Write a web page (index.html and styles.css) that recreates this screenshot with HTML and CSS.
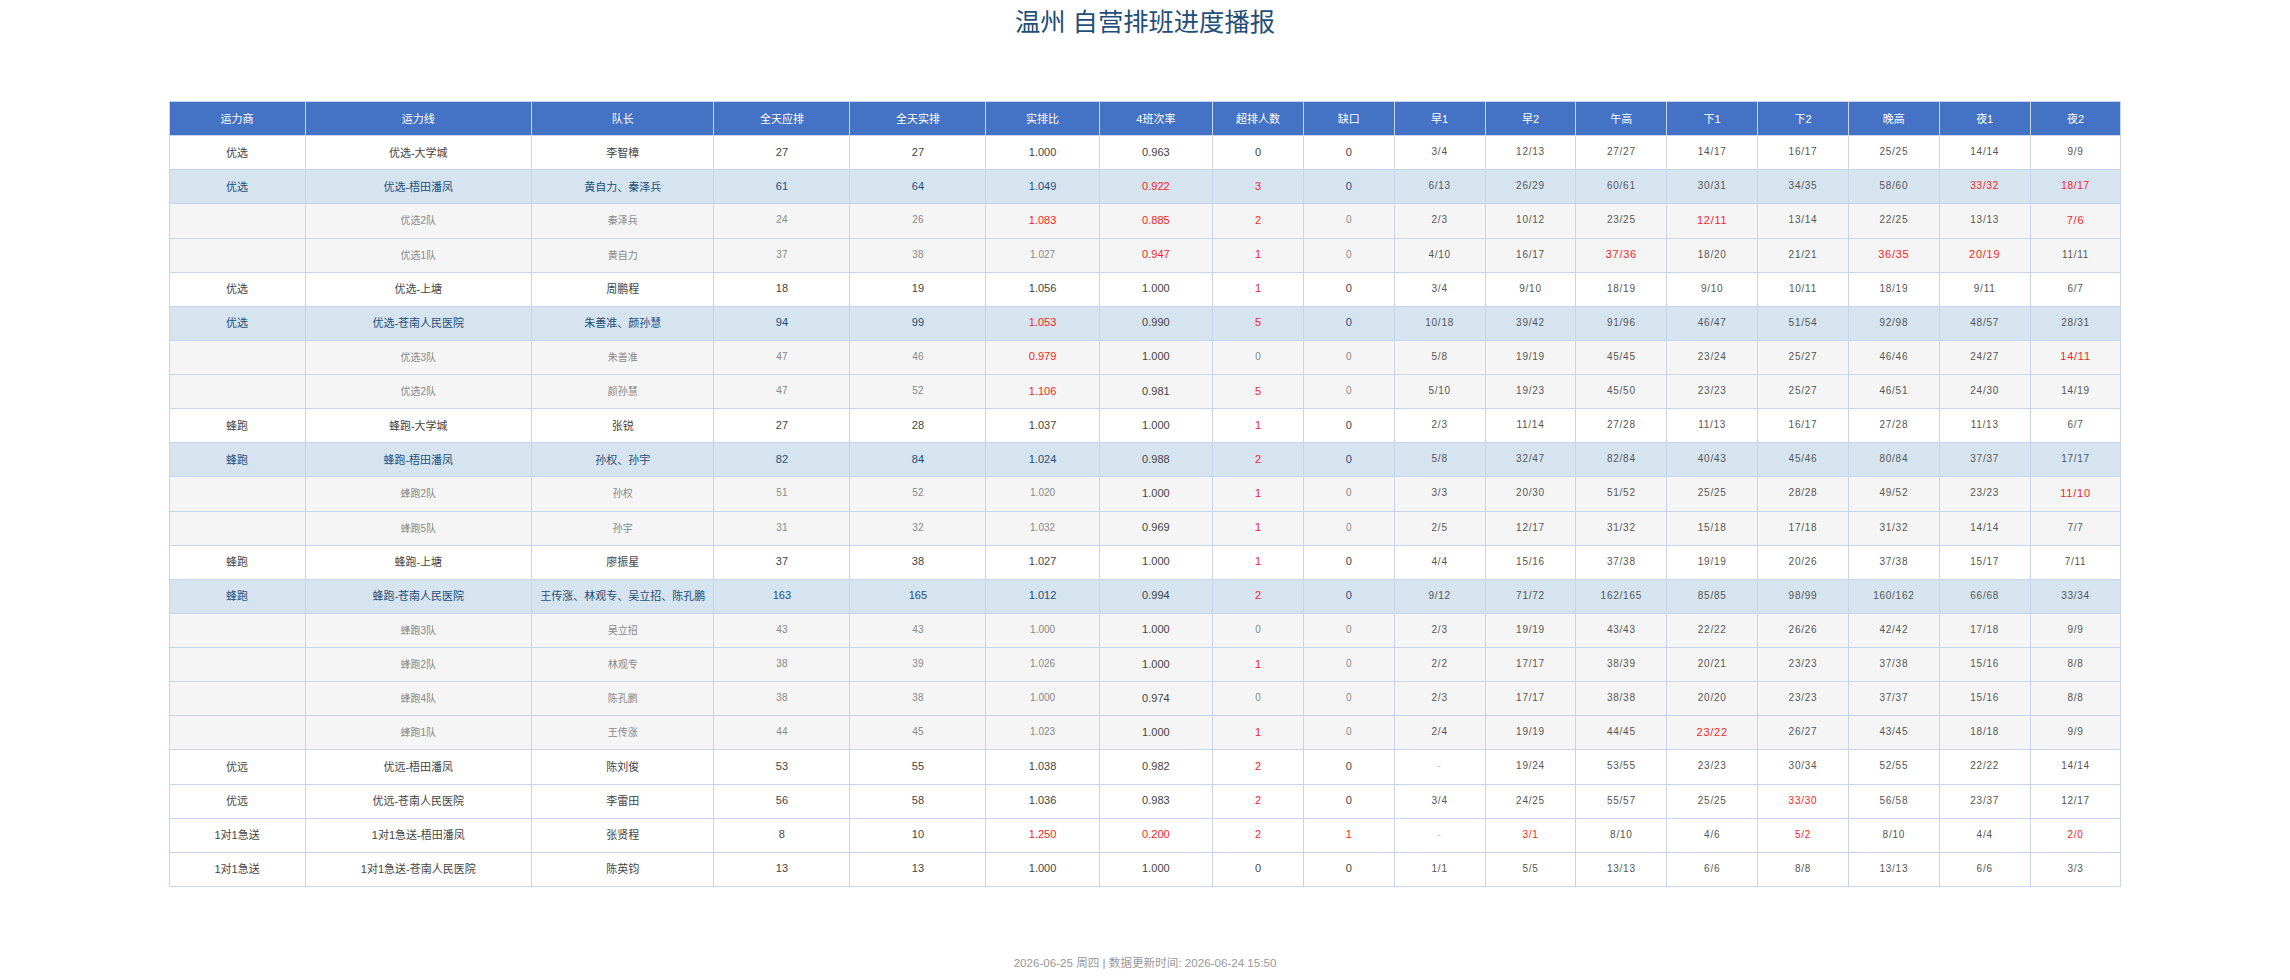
FILE: index.html
```html
<!DOCTYPE html>
<html lang="zh">
<head>
  <meta charset="UTF-8">
  <title>温州 自营排班进度播报</title>
  <link rel="stylesheet" href="styles.css">
</head>
<body>
  <h1>温州 自营排班进度播报</h1>

  <table class="report">
    <colgroup>
      <col class="c-a"><col class="c-b"><col class="c-c"><col class="c-d"><col class="c-d"><col class="c-e"><col class="c-e">
      <col class="c-f"><col class="c-f"><col class="c-f"><col class="c-f"><col class="c-f"><col class="c-f"><col class="c-f"><col class="c-f"><col class="c-f"><col class="c-f">
    </colgroup>
    <thead>
      <tr><th>运力商</th><th>运力线</th><th>队长</th><th>全天应排</th><th>全天实排</th><th>实排比</th><th>4班次率</th><th>超排人数</th><th>缺口</th><th>早1</th><th>早2</th><th>午高</th><th>下1</th><th>下2</th><th>晚高</th><th>夜1</th><th>夜2</th></tr>
    </thead>
    <tbody>
      <tr><td>优选</td><td>优选-大学城</td><td>李智樟</td><td>27</td><td>27</td><td>1.000</td><td class="rate">0.963</td><td>0</td><td>0</td><td class="slot">3/4</td><td class="slot">12/13</td><td class="slot">27/27</td><td class="slot">14/17</td><td class="slot">16/17</td><td class="slot">25/25</td><td class="slot">14/14</td><td class="slot">9/9</td></tr>
      <tr class="sum"><td>优选</td><td>优选-梧田潘凤</td><td>黄自力、秦泽兵</td><td>61</td><td>64</td><td>1.049</td><td class="rate red">0.922</td><td class="red">3</td><td>0</td><td class="slot">6/13</td><td class="slot">26/29</td><td class="slot">60/61</td><td class="slot">30/31</td><td class="slot">34/35</td><td class="slot">58/60</td><td class="slot red">33/32</td><td class="slot red">18/17</td></tr>
      <tr class="team"><td></td><td>优选2队</td><td>秦泽兵</td><td>24</td><td>26</td><td class="red">1.083</td><td class="rate red">0.885</td><td class="red">2</td><td>0</td><td class="slot">2/3</td><td class="slot">10/12</td><td class="slot">23/25</td><td class="slot red">12/11</td><td class="slot">13/14</td><td class="slot">22/25</td><td class="slot">13/13</td><td class="slot red">7/6</td></tr>
      <tr class="team"><td></td><td>优选1队</td><td>黄自力</td><td>37</td><td>38</td><td>1.027</td><td class="rate red">0.947</td><td class="red">1</td><td>0</td><td class="slot">4/10</td><td class="slot">16/17</td><td class="slot red">37/36</td><td class="slot">18/20</td><td class="slot">21/21</td><td class="slot red">36/35</td><td class="slot red">20/19</td><td class="slot">11/11</td></tr>
      <tr><td>优选</td><td>优选-上塘</td><td>周鹏程</td><td>18</td><td>19</td><td>1.056</td><td class="rate">1.000</td><td class="red">1</td><td>0</td><td class="slot">3/4</td><td class="slot">9/10</td><td class="slot">18/19</td><td class="slot">9/10</td><td class="slot">10/11</td><td class="slot">18/19</td><td class="slot">9/11</td><td class="slot">6/7</td></tr>
      <tr class="sum"><td>优选</td><td>优选-苍南人民医院</td><td>朱善准、颜孙慧</td><td>94</td><td>99</td><td class="red">1.053</td><td class="rate">0.990</td><td class="red">5</td><td>0</td><td class="slot">10/18</td><td class="slot">39/42</td><td class="slot">91/96</td><td class="slot">46/47</td><td class="slot">51/54</td><td class="slot">92/98</td><td class="slot">48/57</td><td class="slot">28/31</td></tr>
      <tr class="team"><td></td><td>优选3队</td><td>朱善准</td><td>47</td><td>46</td><td class="red">0.979</td><td class="rate">1.000</td><td>0</td><td>0</td><td class="slot">5/8</td><td class="slot">19/19</td><td class="slot">45/45</td><td class="slot">23/24</td><td class="slot">25/27</td><td class="slot">46/46</td><td class="slot">24/27</td><td class="slot red">14/11</td></tr>
      <tr class="team"><td></td><td>优选2队</td><td>颜孙慧</td><td>47</td><td>52</td><td class="red">1.106</td><td class="rate">0.981</td><td class="red">5</td><td>0</td><td class="slot">5/10</td><td class="slot">19/23</td><td class="slot">45/50</td><td class="slot">23/23</td><td class="slot">25/27</td><td class="slot">46/51</td><td class="slot">24/30</td><td class="slot">14/19</td></tr>
      <tr><td>蜂跑</td><td>蜂跑-大学城</td><td>张锐</td><td>27</td><td>28</td><td>1.037</td><td class="rate">1.000</td><td class="red">1</td><td>0</td><td class="slot">2/3</td><td class="slot">11/14</td><td class="slot">27/28</td><td class="slot">11/13</td><td class="slot">16/17</td><td class="slot">27/28</td><td class="slot">11/13</td><td class="slot">6/7</td></tr>
      <tr class="sum"><td>蜂跑</td><td>蜂跑-梧田潘凤</td><td>孙权、孙宇</td><td>82</td><td>84</td><td>1.024</td><td class="rate">0.988</td><td class="red">2</td><td>0</td><td class="slot">5/8</td><td class="slot">32/47</td><td class="slot">82/84</td><td class="slot">40/43</td><td class="slot">45/46</td><td class="slot">80/84</td><td class="slot">37/37</td><td class="slot">17/17</td></tr>
      <tr class="team"><td></td><td>蜂跑2队</td><td>孙权</td><td>51</td><td>52</td><td>1.020</td><td class="rate">1.000</td><td class="red">1</td><td>0</td><td class="slot">3/3</td><td class="slot">20/30</td><td class="slot">51/52</td><td class="slot">25/25</td><td class="slot">28/28</td><td class="slot">49/52</td><td class="slot">23/23</td><td class="slot red">11/10</td></tr>
      <tr class="team"><td></td><td>蜂跑5队</td><td>孙宇</td><td>31</td><td>32</td><td>1.032</td><td class="rate">0.969</td><td class="red">1</td><td>0</td><td class="slot">2/5</td><td class="slot">12/17</td><td class="slot">31/32</td><td class="slot">15/18</td><td class="slot">17/18</td><td class="slot">31/32</td><td class="slot">14/14</td><td class="slot">7/7</td></tr>
      <tr><td>蜂跑</td><td>蜂跑-上塘</td><td>廖振星</td><td>37</td><td>38</td><td>1.027</td><td class="rate">1.000</td><td class="red">1</td><td>0</td><td class="slot">4/4</td><td class="slot">15/16</td><td class="slot">37/38</td><td class="slot">19/19</td><td class="slot">20/26</td><td class="slot">37/38</td><td class="slot">15/17</td><td class="slot">7/11</td></tr>
      <tr class="sum"><td>蜂跑</td><td>蜂跑-苍南人民医院</td><td>王传涨、林观专、吴立招、陈孔鹏</td><td>163</td><td>165</td><td>1.012</td><td class="rate">0.994</td><td class="red">2</td><td>0</td><td class="slot">9/12</td><td class="slot">71/72</td><td class="slot">162/165</td><td class="slot">85/85</td><td class="slot">98/99</td><td class="slot">160/162</td><td class="slot">66/68</td><td class="slot">33/34</td></tr>
      <tr class="team"><td></td><td>蜂跑3队</td><td>吴立招</td><td>43</td><td>43</td><td>1.000</td><td class="rate">1.000</td><td>0</td><td>0</td><td class="slot">2/3</td><td class="slot">19/19</td><td class="slot">43/43</td><td class="slot">22/22</td><td class="slot">26/26</td><td class="slot">42/42</td><td class="slot">17/18</td><td class="slot">9/9</td></tr>
      <tr class="team"><td></td><td>蜂跑2队</td><td>林观专</td><td>38</td><td>39</td><td>1.026</td><td class="rate">1.000</td><td class="red">1</td><td>0</td><td class="slot">2/2</td><td class="slot">17/17</td><td class="slot">38/39</td><td class="slot">20/21</td><td class="slot">23/23</td><td class="slot">37/38</td><td class="slot">15/16</td><td class="slot">8/8</td></tr>
      <tr class="team"><td></td><td>蜂跑4队</td><td>陈孔鹏</td><td>38</td><td>38</td><td>1.000</td><td class="rate">0.974</td><td>0</td><td>0</td><td class="slot">2/3</td><td class="slot">17/17</td><td class="slot">38/38</td><td class="slot">20/20</td><td class="slot">23/23</td><td class="slot">37/37</td><td class="slot">15/16</td><td class="slot">8/8</td></tr>
      <tr class="team"><td></td><td>蜂跑1队</td><td>王传涨</td><td>44</td><td>45</td><td>1.023</td><td class="rate">1.000</td><td class="red">1</td><td>0</td><td class="slot">2/4</td><td class="slot">19/19</td><td class="slot">44/45</td><td class="slot red">23/22</td><td class="slot">26/27</td><td class="slot">43/45</td><td class="slot">18/18</td><td class="slot">9/9</td></tr>
      <tr><td>优远</td><td>优远-梧田潘凤</td><td>陈刘俊</td><td>53</td><td>55</td><td>1.038</td><td class="rate">0.982</td><td class="red">2</td><td>0</td><td class="slot none">-</td><td class="slot">19/24</td><td class="slot">53/55</td><td class="slot">23/23</td><td class="slot">30/34</td><td class="slot">52/55</td><td class="slot">22/22</td><td class="slot">14/14</td></tr>
      <tr><td>优远</td><td>优远-苍南人民医院</td><td>李雷田</td><td>56</td><td>58</td><td>1.036</td><td class="rate">0.983</td><td class="red">2</td><td>0</td><td class="slot">3/4</td><td class="slot">24/25</td><td class="slot">55/57</td><td class="slot">25/25</td><td class="slot red">33/30</td><td class="slot">56/58</td><td class="slot">23/37</td><td class="slot">12/17</td></tr>
      <tr><td>1对1急送</td><td>1对1急送-梧田潘凤</td><td>张贤程</td><td>8</td><td>10</td><td class="red">1.250</td><td class="rate red">0.200</td><td class="red">2</td><td class="red">1</td><td class="slot none">-</td><td class="slot red">3/1</td><td class="slot">8/10</td><td class="slot">4/6</td><td class="slot red">5/2</td><td class="slot">8/10</td><td class="slot">4/4</td><td class="slot red">2/0</td></tr>
      <tr><td>1对1急送</td><td>1对1急送-苍南人民医院</td><td>陈英钧</td><td>13</td><td>13</td><td>1.000</td><td class="rate">1.000</td><td>0</td><td>0</td><td class="slot">1/1</td><td class="slot">5/5</td><td class="slot">13/13</td><td class="slot">6/6</td><td class="slot">8/8</td><td class="slot">13/13</td><td class="slot">6/6</td><td class="slot">3/3</td></tr>
    </tbody>
  </table>

  <div class="footer">2026-06-25 周四 | 数据更新时间: 2026-06-24 15:50</div>
</body>
</html>
```

FILE: styles.css
```css
html, body {
  margin: 0;
  padding: 0;
  background: #fff;
  font-family: "Liberation Sans", "Noto Sans CJK SC", sans-serif;
  color: #444;
}

h1 {
  margin: 0 0 54px;
  height: 47px;
  line-height: 44px;
  text-align: center;
  font-size: 25.3px;
  font-weight: normal;
  color: #1f4e79;
}

.report {
  width: 1951px;
  margin: 0 auto;
  border-collapse: collapse;
  table-layout: fixed;
  font-size: 11px;
}

.c-a { width: 136px; }
.c-b { width: 226.4px; }
.c-c { width: 182.5px; }
.c-d { width: 136px; }
.c-e { width: 113.3px; }
.c-f { width: 90.85px; }

.report th,
.report td {
  height: 34.13px;
  padding: 0 4px 2px;
  border: 1px solid #c6d4ec;
  text-align: center;
  box-sizing: border-box;
}

.report th {
  background-color: #4472c4;
  color: #fff;
  font-weight: normal;
}

.sum td {
  background-color: #d6e4f0;
  color: #1f4e79;
}

.team td {
  background-color: #f5f5f5;
  font-size: 10px;
  color: #888;
}

.report .rate {
  font-size: 11px;
  color: #444;
}

.report .slot {
  font-size: 10px;
  letter-spacing: 0.75px;
  color: #555;
}

.report .none {
  color: #bbb;
}

.report .red {
  color: #ff1a1a;
}

.team .red {
  font-size: 11px;
}

.footer {
  margin-top: 67px;
  text-align: center;
  font-size: 11.6px;
  color: #999;
}
```
